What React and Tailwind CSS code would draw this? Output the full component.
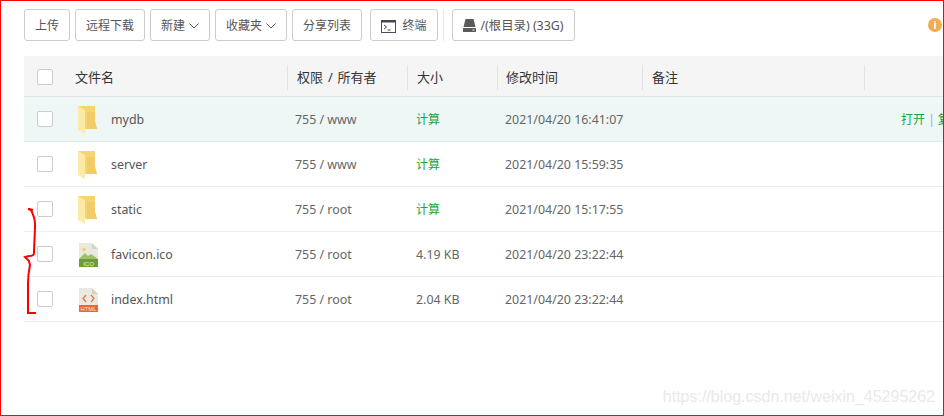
const FONT = "font-['Noto_Sans','Noto_Sans_CJK_SC',sans-serif]";

const rows = [
  { name: 'mydb', icon: 'folder', perm: '755 / www', size: '计算', time: '2021/04/20 16:41:07', active: true },
  { name: 'server', icon: 'folder', perm: '755 / www', size: '计算', time: '2021/04/20 15:59:35' },
  { name: 'static', icon: 'folder', perm: '755 / root', size: '计算', time: '2021/04/20 15:17:55' },
  { name: 'favicon.ico', icon: 'image', perm: '755 / root', size: '4.19 KB', time: '2021/04/20 23:22:44' },
  { name: 'index.html', icon: 'html', perm: '755 / root', size: '2.04 KB', time: '2021/04/20 23:22:44' },
];

function Chevron() {
  return (
    <svg width="10" height="6" viewBox="0 0 10 6" fill="none" stroke="#555" strokeWidth="1" className="ml-[4px]">
      <path d="M.5.5 5 5 9.500.5" />
    </svg>
  );
}

function Btn({ children, className = '' }) {
  return (
    <button className={`flex h-8 shrink-0 items-center justify-center rounded-[3px] border border-[#ccc] bg-white pt-[2px] text-[12px] text-[#555] ${className}`}>
      {children}
    </button>
  );
}

function Checkbox() {
  return <span className="block h-4 w-4 rounded-[2px] border border-[#ccc] bg-white" />;
}

function FolderIcon() {
  return (
    <svg width="20" height="28" viewBox="0 0 20 28">
      <path d="M0 0h17v16l2 7H4z" fill="#f6d473" />
      <path d="M9 6h8v10l2 7H9z" fill="#f2cc68" />
      <path d="M0 0l7 4v24l-7-4z" fill="#fdeaa8" />
    </svg>
  );
}

function ImageIcon() {
  return (
    <svg width="19" height="24" viewBox="0 0 19 24">
      <path d="M0 0h13l6 6v18H0z" fill="#e9e9df" />
      <path d="M13 0l6 6h-6z" fill="#d2d2c6" />
      <circle cx="5" cy="6.500" r="1.800" fill="#f4cf5f" />
      <path d="M0 16l6-6 3 3 3-2 7 5v4H0z" fill="#9cc268" />
      <rect y="16" width="19" height="8" fill="#6a9e3a" />
      <text x="9.500" y="22.500" textAnchor="middle" fontSize="6" fill="#e8f2d8" fontFamily="Liberation Sans">ICO</text>
    </svg>
  );
}

function HtmlIcon() {
  return (
    <svg width="19" height="24" viewBox="0 0 19 24">
      <path d="M0 0h13l6 6v18H0z" fill="#e9e9df" />
      <path d="M13 0l6 6h-6z" fill="#d2d2c6" />
      <path d="M7 7 4 10.500 7 14M12 7l3 3.500L12 14" fill="none" stroke="#e8744a" strokeWidth="1.300" />
      <rect y="17" width="19" height="7" fill="#e8683a" />
      <text x="9.500" y="22.700" textAnchor="middle" fontSize="5.800" fill="#fbe6da" fontFamily="Liberation Sans">HTML</text>
    </svg>
  );
}

function FileIcon({ type }) {
  if (type === 'folder') return <FolderIcon />;
  if (type === 'image') return <ImageIcon />;
  return <HtmlIcon />;
}

function TerminalIcon() {
  return (
    <svg width="15" height="13" viewBox="0 0 15 13">
      <rect x=".5" y=".5" width="14" height="12" fill="#fff" stroke="#554a5c" />
      <rect width="15" height="2.500" fill="#4a4450" />
      <path d="M3 5 5.500 7 3 9" fill="none" stroke="#444" />
      <path d="M6.500 10h3" stroke="#444" />
    </svg>
  );
}

function DiskIcon() {
  return (
    <svg width="13" height="13" viewBox="0 0 13 13" className="-mt-[2px]">
      <path d="M2.500 0h8l2 8H.5z" fill="#5a5a5a" />
      <rect y="9" width="13" height="4" rx=".5" fill="#5a5a5a" />
      <rect x="9.500" y="10.500" width="2" height="1" fill="#fff" />
    </svg>
  );
}

function HeadCell({ className = '', children }) {
  return (
    <div className={`flex h-[25px] shrink-0 items-center border-r border-[#e2e2e2] pt-[2px] ${className}`}>{children}</div>
  );
}

export default function App() {
  return (
    <div className={`relative h-[416px] w-[944px] overflow-hidden bg-white ${FONT}`}>
      <div className="flex items-center pl-6 pt-[9px]">
        <Btn className="w-[46px]">上传</Btn>
        <Btn className="ml-[5px] w-[70px]">远程下载</Btn>
        <Btn className="ml-[5px] w-[60px]">新建<Chevron /></Btn>
        <Btn className="ml-[5px] w-[72px]">收藏夹<Chevron /></Btn>
        <Btn className="ml-[5px] w-[70px]">分享列表</Btn>
        <Btn className="ml-2 w-[68px]"><TerminalIcon /><span className="ml-[6px]">终端</span></Btn>
        <span className="ml-[5px] h-8 w-px bg-[#e8e8e8]" />
        <Btn className="ml-2 w-[123px]"><DiskIcon /><span className="ml-[4px] text-[12.400px]">/(根目录) (33G)</span></Btn>
        <span className="ml-auto mr-[2px] flex h-[14px] w-[14px] items-center justify-center rounded-full bg-[#f0ad4e] text-[10px] font-bold leading-none text-white">i</span>
      </div>

      <div className="ml-6 mt-[15px] w-[920px]">
        <div className="flex h-[41px] items-center border-b border-[#e4e4e4] bg-[#f5f5f5] pt-[2px] text-[13px] text-[#333]">
          <div className="flex w-[51px] shrink-0 pl-[13px]"><Checkbox /></div>
          <HeadCell className="w-[213px]">文件名</HeadCell>
          <HeadCell className="w-[120px] pl-[9px] [word-spacing:1.500px]">权限 / 所有者</HeadCell>
          <HeadCell className="w-[90px] pl-[9px]">大小</HeadCell>
          <HeadCell className="w-[145px] pl-2">修改时间</HeadCell>
          <HeadCell className="w-[222px] pl-[9px]">备注</HeadCell>
        </div>
        {rows.map((row) => (
          <div
            key={row.name}
            className={`flex h-[45px] items-center border-b text-[12.400px] text-[#666] ${row.active ? 'border-[#e2ecea] bg-[#eff7f6]' : 'border-[#eeeeee] bg-white'}`}
          >
            <div className="flex w-[51px] shrink-0 pl-[13px]"><Checkbox /></div>
            <div className="ml-[3px] mt-[2px] flex w-[20px] shrink-0 justify-center"><FileIcon type={row.icon} /></div>
            <div className="ml-[13px] mt-[2px] w-[184px] shrink-0 text-[#555]">{row.name}</div>
            <div className="mt-[2px] w-[121px] shrink-0">{row.perm}</div>
            <div className={row.size === '计算' ? 'mt-[2px] w-[89px] shrink-0 text-[12px] text-[#20a53a]' : 'mt-[2px] w-[89px] shrink-0'}>{row.size}</div>
            <div className="mt-[2px] w-[396px] shrink-0 whitespace-nowrap">{row.time}</div>
            {row.active && <div className="mt-[2px] whitespace-nowrap text-[12px] text-[#20a53a]">打开 <span className="text-[#7fb3d5]">|</span> 复制</div>}
          </div>
        ))}
      </div>

      {/* red annotation drawn on the screenshot */}
      <svg className="absolute left-[20px] top-[205px]" width="20" height="112" viewBox="0 0 20 112" fill="none" stroke="#f00" strokeWidth="2">
        <path d="M13 5 8 4l3 1c2 4 4 10 4 14 0 10-1 22-1 29 0 2-2 3-5 3l-4 1 4 4 1 4c-1 5-2 12-2 18v30h8" />
      </svg>
      <div className="pointer-events-none absolute inset-0 border border-[#f00] border-b-[#e01010] border-r-[#e01010]" />

      {/* watermark */}
      <div className="absolute bottom-[7px] right-[9px] font-['Liberation_Sans',sans-serif] text-[16px] text-[#e9e9e9]">
        https://blog.csdn.net/weixin_45295262
      </div>
    </div>
  );
}
